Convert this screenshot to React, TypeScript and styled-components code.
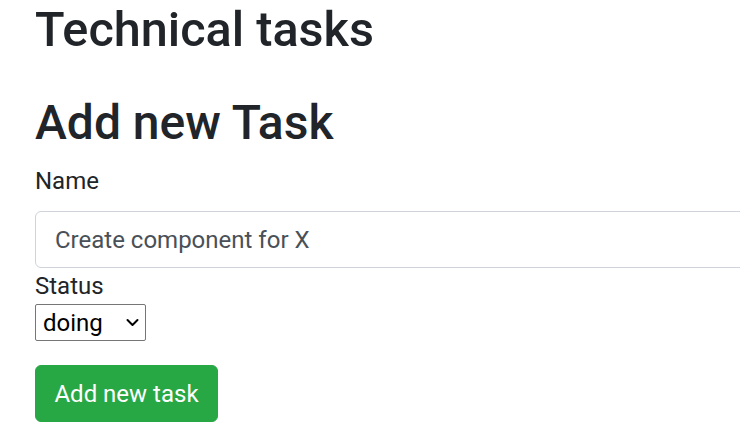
import React from "react";
import styled, { createGlobalStyle } from "styled-components";

const GlobalStyle = createGlobalStyle`
  html, body {
    margin: 0;
    padding: 0;
    overflow: hidden;
    background: #fff;
  }
  body {
    font-family: Roboto, "Liberation Sans", Arial, sans-serif;
    font-size: 24px;
    line-height: 1.5;
    color: #212529;
  }
`;

const Page = styled.div`
  padding: 1px 0 0 35px;
  width: 800px;
`;

const Title = styled.h1`
  margin: 0 0 35px;
  font-size: 48.6px;
  font-weight: 500;
  line-height: 1.2;
`;

const SubTitle = styled.h2`
  margin: 0 0 11.5px;
  font-size: 48px;
  font-weight: 500;
  line-height: 1.2;
`;

const Form = styled.form`
  display: flex;
  flex-direction: column;
  align-items: flex-start;
`;

const Label = styled.label<{ $gap?: number }>`
  display: block;
  font-size: 24px;
  line-height: 36px;
  margin-bottom: ${(p) => p.$gap ?? 0}px;
`;

const TextInput = styled.input`
  box-sizing: border-box;
  width: 760px;
  height: 57px;
  padding: 0 19px;
  font-family: Roboto, "Liberation Sans", Arial, sans-serif;
  font-size: 24px;
  color: #495057;
  background: #fff;
  border: 1.5px solid #ced4da;
  border-radius: 6px;
  outline: none;
`;

const SelectWrap = styled.div`
  position: relative;
  width: 111px;
  height: 37px;
`;

const Select = styled.select`
  appearance: none;
  -webkit-appearance: none;
  box-sizing: border-box;
  width: 111px;
  height: 37px;
  margin: 0;
  padding: 0 24px 0 7px;
  font-family: Roboto, "Liberation Sans", Arial, sans-serif;
  font-size: 24px;
  color: #000;
  background: #fff;
  border: 1px solid #767676;
  border-radius: 2px;
`;

const Chevron = styled.svg`
  position: absolute;
  left: 91px;
  top: 14px;
  width: 13px;
  height: 9px;
  pointer-events: none;
`;

const Button = styled.button`
  box-sizing: border-box;
  margin-top: 24px;
  width: 183px;
  height: 57px;
  padding: 0 18px;
  font-family: Roboto, "Liberation Sans", Arial, sans-serif;
  font-size: 24px;
  white-space: nowrap;
  color: #fff;
  background: #28a745;
  border: 1.5px solid #28a745;
  border-radius: 6px;
  text-align: center;
`;

export default function App() {
  return (
    <>
      <GlobalStyle />
      <Page>
        <Title>Technical tasks</Title>
        <SubTitle>Add new Task</SubTitle>
        <Form onSubmit={(e) => e.preventDefault()}>
          <Label htmlFor="name" $gap={12}>Name</Label>
          <TextInput id="name" defaultValue="Create component for X" />
          <Label htmlFor="status">Status</Label>
          <SelectWrap>
            <Select id="status" defaultValue="doing">
              <option value="todo">todo</option>
              <option value="doing">doing</option>
              <option value="done">done</option>
            </Select>
            <Chevron viewBox="0 0 13 9" aria-hidden="true">
              <polyline
                points="1.5,2 6.5,7 11.5,2"
                fill="none"
                stroke="#000"
                strokeWidth="2"
                strokeLinecap="round"
                strokeLinejoin="round"
              />
            </Chevron>
          </SelectWrap>
          <Button type="submit">Add new task</Button>
        </Form>
      </Page>
    </>
  );
}
